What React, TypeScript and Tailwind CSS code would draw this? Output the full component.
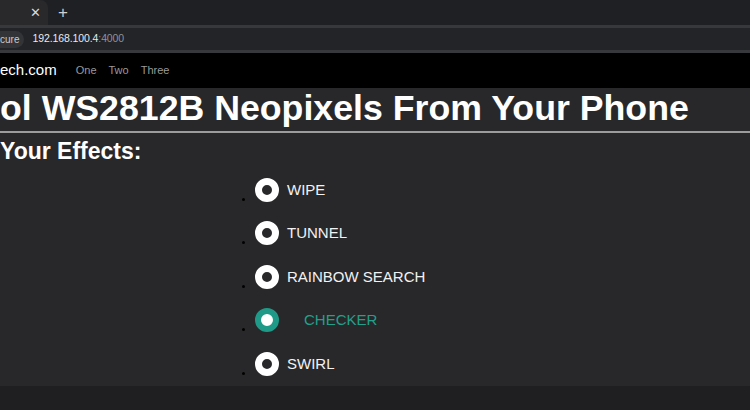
const effects = [
  { name: "WIPE", active: false },
  { name: "TUNNEL", active: false },
  { name: "RAINBOW SEARCH", active: false },
  { name: "CHECKER", active: true },
  { name: "SWIRL", active: false },
];

export default function App() {
  return (
    <div className="w-[750px] h-[410px] overflow-hidden bg-[#1f1f22] font-['Liberation_Sans',Arial,sans-serif]">
      {/* browser tab strip */}
      <div className="h-[25px] bg-[#1f2023] flex items-stretch">
        <div className="w-[48px] bg-[#29292c] rounded-tr-[8px] flex items-center justify-end pr-[7px]">
          <span className="text-[#d8d8d8] text-[13px] leading-none">✕</span>
        </div>
        <div className="ml-[10px] flex items-center">
          <span className="text-[#cfcfcf] text-[17px] leading-none">+</span>
        </div>
      </div>
      <div className="h-[3px] bg-[#37383b]" />

      {/* address bar */}
      <div className="h-[22px] bg-[#232427] flex items-center">
        <div className="h-[17px] bg-[#333437] rounded-r-full pr-[5px] flex items-center">
          <span className="text-[#c9c9c9] text-[10px]">cure</span>
        </div>
        <div className="ml-[8px] text-[10.5px] tracking-[-0.1px]">
          <span className="text-[#e8eaed]">192.168.100.4</span>
          <span className="text-[#8e9196]">:4000</span>
        </div>
      </div>
      <div className="h-[3px] bg-[#37383b]" />

      {/* site nav */}
      <nav className="h-[35px] bg-black flex items-center">
        <span className="text-white text-[15px]">ech.com</span>
        <div className="ml-[19px] flex gap-[12px] text-[11px] text-[#9a9a9a]">
          <span>One</span>
          <span>Two</span>
          <span>Three</span>
        </div>
      </nav>

      <main className="h-[298px] bg-[#28282a]">
        <h1 className="text-white font-bold text-[35.7px] leading-[40px] whitespace-nowrap">
          ol WS2812B Neopixels From Your Phone
        </h1>
        <div className="mt-[3px] h-[2px] bg-[#9c9c9c]" />
        <h2 className="mt-[4px] text-white font-bold text-[23px] leading-[28px] whitespace-nowrap">
          Your Effects:
        </h2>

        <ul className="mt-[3px]">
          {effects.map((e) => (
            <li key={e.name} className="h-[43.5px] flex items-center pl-[242px]">
              <span className="w-[3px] h-[3px] rounded-full bg-black mt-[19px]" />
              <span
                className={
                  e.active
                    ? "ml-[10px] w-[24px] h-[24px] rounded-full border-[6px] border-[#1f9a88] bg-white"
                    : "ml-[10px] w-[24px] h-[24px] rounded-full border-[7px] border-white bg-[#28282a]"
                }
              />
              <span
                className={
                  e.active
                    ? "ml-[25px] text-[15px] text-[#22a08c]"
                    : "ml-[8px] text-[15px] text-[#f2f2f2]"
                }
              >
                {e.name}
              </span>
            </li>
          ))}
        </ul>
      </main>
    </div>
  );
}
